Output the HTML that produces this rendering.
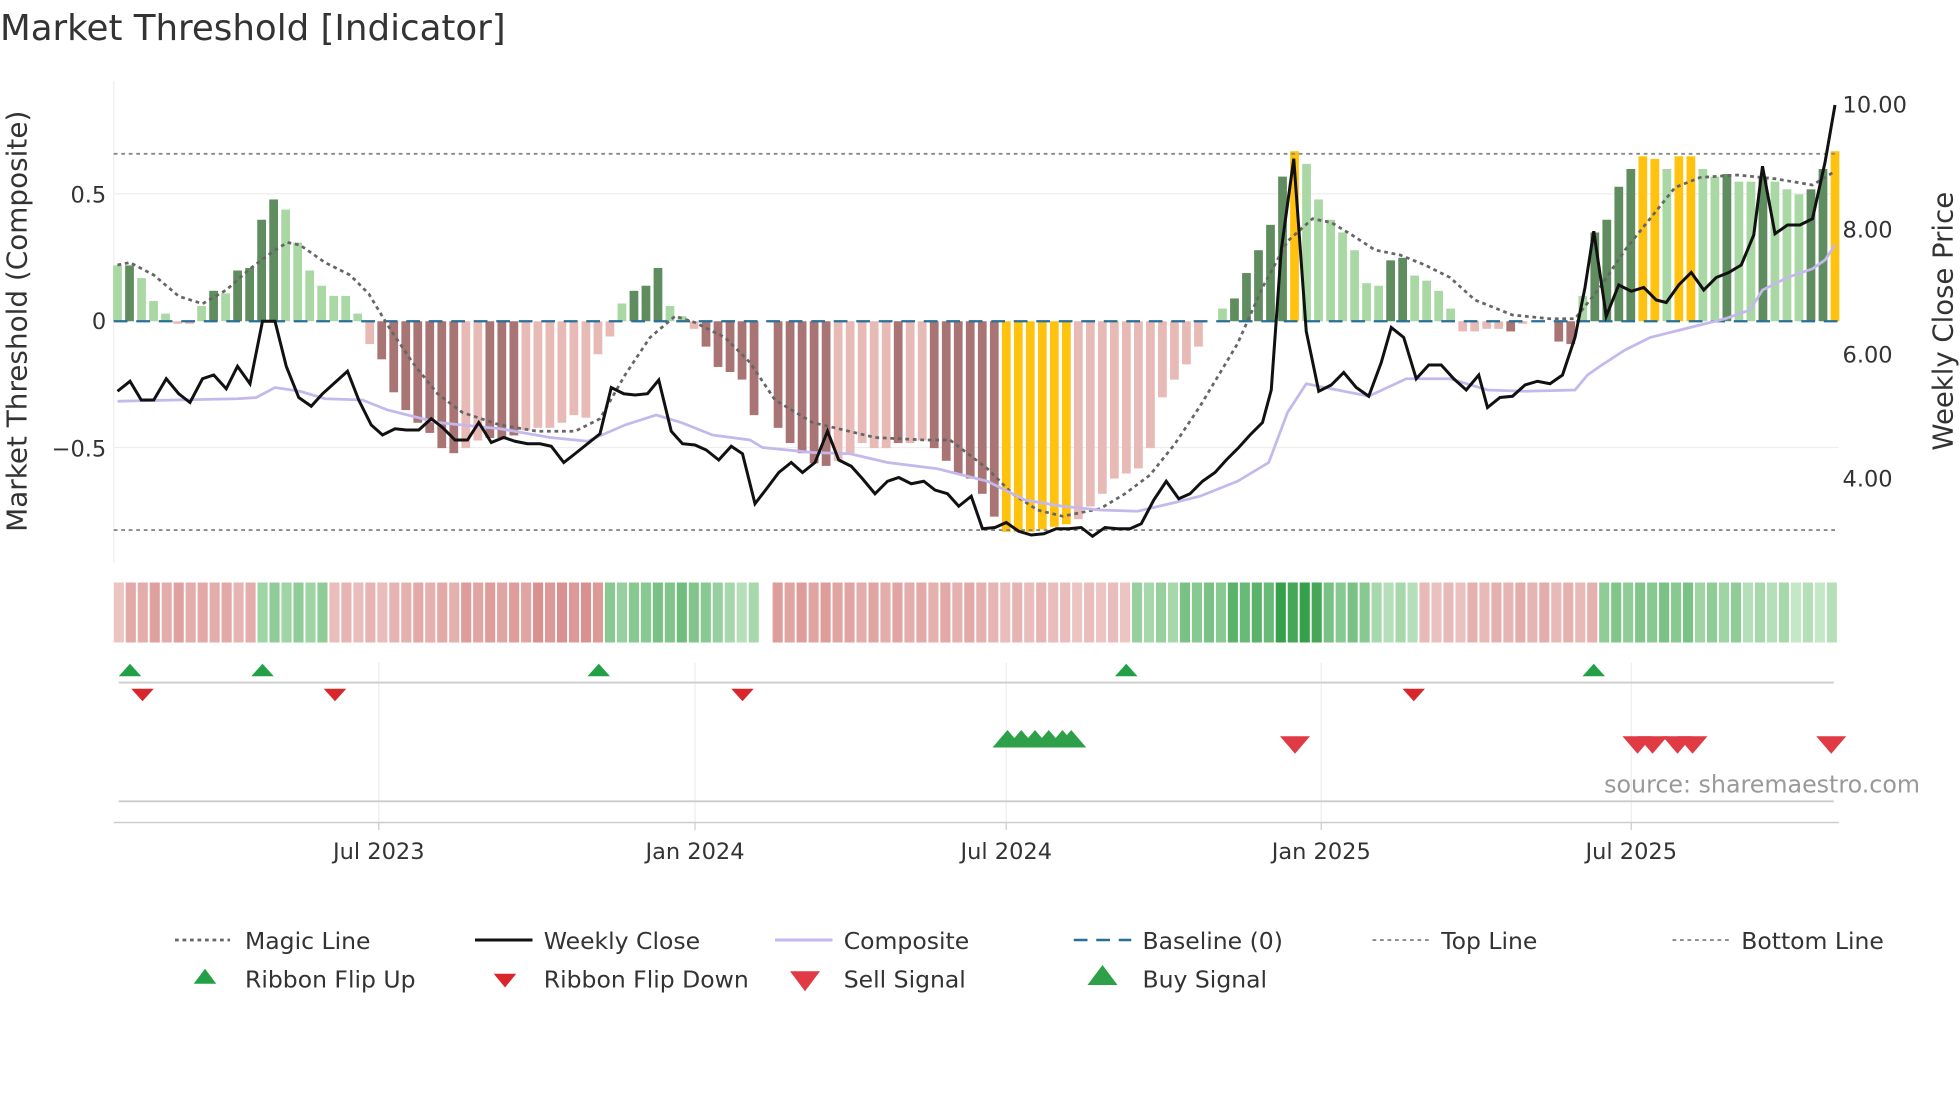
<!DOCTYPE html>
<html><head><meta charset="utf-8"><style>
html,body{margin:0;padding:0;background:#fff;width:1960px;height:1102px;overflow:hidden}
svg{display:block}
text{font-family:"DejaVu Sans","Liberation Sans",sans-serif;fill:#333}
</style></head><body>
<svg id="s" width="1960" height="1102" viewBox="0 0 1568 881.6" preserveAspectRatio="none" xmlns="http://www.w3.org/2000/svg">
<text x="0" y="32" font-size="28.5">Market Threshold [Indicator]</text>
<line x1="91" y1="65" x2="91" y2="450" stroke="#eee" stroke-width="1"/>
<line x1="91" y1="155" x2="1471" y2="155" stroke="#eee"/>
<line x1="91" y1="358" x2="1471" y2="358" stroke="#eee"/>
<g id="bars"></g>
<line x1="91" y1="123" x2="1471" y2="123" stroke="#888" stroke-width="1.5" stroke-dasharray="3,3"/>
<line x1="91" y1="424" x2="1471" y2="424" stroke="#888" stroke-width="1.5" stroke-dasharray="3,3"/>
<line x1="91" y1="257" x2="1471" y2="257" stroke="#2a6f97" stroke-width="1.8" stroke-dasharray="11,7"/>
<polyline id="magic" fill="none" stroke="#666" stroke-width="2.2" stroke-dasharray="3,3"/>
<polyline id="comp" fill="none" stroke="#c4b8ec" stroke-width="2.2"/>
<polyline id="close" fill="none" stroke="#111" stroke-width="2.4"/>
<g font-size="18">
<text x="85" y="162" text-anchor="end">0.5</text>
<text x="85" y="263" text-anchor="end">0</text>
<text x="85" y="365" text-anchor="end">−0.5</text>
<text x="1474" y="90">10.00</text>
<text x="1474" y="190">8.00</text>
<text x="1474" y="290">6.00</text>
<text x="1474" y="389">4.00</text>
</g>
<text transform="translate(21,257) rotate(-90)" font-size="22.3" text-anchor="middle">Market Threshold (Composite)</text>
<text transform="translate(1562,257) rotate(-90)" font-size="22" text-anchor="middle">Weekly Close Price</text>
<g id="ribbon"></g>
<g stroke="#eee" stroke-width="1">
<line x1="303" y1="530" x2="303" y2="660"/><line x1="556" y1="530" x2="556" y2="660"/><line x1="805" y1="530" x2="805" y2="660"/><line x1="1057" y1="530" x2="1057" y2="660"/><line x1="1305" y1="530" x2="1305" y2="660"/>
</g>
<line x1="95" y1="546" x2="1467" y2="546" stroke="#ccc" stroke-width="1.5"/>
<line x1="95" y1="641" x2="1467" y2="641" stroke="#ccc" stroke-width="1.5"/>
<line x1="91" y1="658" x2="1471" y2="658" stroke="#ccc" stroke-width="1.2"/>
<g stroke="#ccc"><line x1="303" y1="658" x2="303" y2="664"/><line x1="556" y1="658" x2="556" y2="664"/><line x1="805" y1="658" x2="805" y2="664"/><line x1="1057" y1="658" x2="1057" y2="664"/><line x1="1305" y1="658" x2="1305" y2="664"/></g>
<g id="marks"></g>
<text x="1536" y="634" font-size="19" text-anchor="end" style="fill:#999">source: sharemaestro.com</text>
<g font-size="18" text-anchor="middle">
<text x="303" y="687">Jul 2023</text><text x="556" y="687">Jan 2024</text><text x="805" y="687">Jul 2024</text><text x="1057" y="687">Jan 2025</text><text x="1305" y="687">Jul 2025</text>
</g>
<g font-size="18.8">
<line x1="140" y1="752" x2="184" y2="752" stroke="#666" stroke-width="2.2" stroke-dasharray="3,3"/><text x="196" y="759">Magic Line</text>
<line x1="380" y1="752" x2="426" y2="752" stroke="#111" stroke-width="2.4"/><text x="435" y="759">Weekly Close</text>
<line x1="620" y1="752" x2="666" y2="752" stroke="#c4b8ec" stroke-width="2.4"/><text x="675" y="759">Composite</text>
<line x1="859" y1="752" x2="905" y2="752" stroke="#2a6f97" stroke-width="2" stroke-dasharray="11,7"/><text x="914" y="759">Baseline (0)</text>
<line x1="1098" y1="752" x2="1143" y2="752" stroke="#888" stroke-width="1.5" stroke-dasharray="3,3"/><text x="1153" y="759">Top Line</text>
<line x1="1338" y1="752" x2="1383" y2="752" stroke="#888" stroke-width="1.5" stroke-dasharray="3,3"/><text x="1393" y="759">Bottom Line</text>
<polygon points="155,787 173,787 164,775" fill="#22a045"/><text x="196" y="790">Ribbon Flip Up</text>
<polygon points="395,779 413,779 404,790" fill="#d9262b"/><text x="435" y="790">Ribbon Flip Down</text>
<polygon points="632,777 656,777 644,793" fill="#e03a45"/><text x="675" y="790">Sell Signal</text>
<polygon points="870,788 894,788 882,772" fill="#2ea04a"/><text x="914" y="790">Buy Signal</text>
</g>
</svg>
<script>
var NS="http://www.w3.org/2000/svg";
function el(p,t,a){var e=document.createElementNS(NS,t);for(var k in a)e.setAttribute(k,a[k]);p.appendChild(e);return e;}
var V="0.22L .22D .17L .08L .03L -.01P -.01P .06L .12D .11L .2D .21D .4D .48D .44L .31L .2L .14L .1L .1L .03L -.09P -.15R -.28R -.35R -.4R -.44R -.5R -.52R -.5P -.47P -.46R -.46R -.45R -.43P -.42P -.42P -.4P -.37P -.38P -.13P -.06P .07L .12D .14D .21D .06L .02L -.03P -.1R -.18R -.2R -.23R -.37R 0P -.42R -.48R -.52R -.56R -.57R -.55P -.52P -.48P -.5P -.5P -.48R -.48P -.47P -.5R -.55R -.6R -.62R -.68R -.77R -.83Y -.83Y -.83Y -.82Y -.81Y -.8Y -.78P -.73P -.68P -.62P -.6P -.58P -.5P -.3P -.23P -.17P -.1P 0P .05L .09D .19D .28D .38D .57D .67Y .62L .48L .4L .35L .28L .15L .14L .24D .25D .18L .16L .12L .05L -.04P -.04P -.03P -.03P -.04R -.01P 0P 0P -.08R -.09R .1L .35D .4D .53D .6D .65Y .64Y .6L .65Y .65Y .6L .57L .58D .55L .55L .57D .55L .52L .5L .52D .6D .67Y".split(" ");
var C={L:"#a9d8a4",D:"#5f8d5f",P:"#e8bab6",R:"#a87474",Y:"#ffc20e"};
var g=document.getElementById("bars"),n=V.length,st=(1468-94)/(n-1);
for(var i=0;i<n;i++){var s=V[i],c=s.slice(-1),v=parseFloat(s),x=94+i*st,y=257-203*v;
if(v==0)continue;el(g,"rect",{x:x-3.5,y:Math.min(y,257),width:7,height:Math.abs(y-257),fill:C[c]});}
var rg=document.getElementById("ribbon");
function mix(a,b,t){return "rgb("+[0,1,2].map(function(k){return Math.round(a[k]+(b[k]-a[k])*t)}).join(",")+")";}
var pk=[240,210,208],rd=[212,130,128],lg=[205,235,205],dg=[55,160,75];
var segs=[[0,11,"r",[.2,.45,.5,.55,.5,.55,.5,.45,.5,.45,.4,.4]],[12,17,"g",[.35]],[18,40,"r",[.3,.45,.6,.75]],[41,53,"g",[.4,.5,.55,.4,.2]],[55,84,"r",[.6,.5,.45,.3,.2]],[85,108,"g",[.3,.5,.7,.95,.5,.2]],[109,123,"r",[.25,.35,.4,.35]],[124,143,"g",[.45,.5,.35,.2,.1]]];
segs.forEach(function(sg){for(var i=sg[0];i<=sg[1];i++){var f=(i-sg[0])/Math.max(1,sg[1]-sg[0]);var arr=sg[3];var t=arr[Math.min(arr.length-1,Math.floor(f*arr.length))];t+=((i%2)?0.06:-0.04);
var col=sg[2]=="r"?mix(pk,rd,t):mix(lg,dg,t);var x=91+i*(1380/144);el(rg,"rect",{x:x,y:466,width:8.1,height:48,fill:col});}});
function pts(id,s){document.getElementById(id).setAttribute("points",s);}
pts("close","94,313 104,305 113,320 123,320 133,303 143,315 152,322 162,303 171,300 181,311 190,293 200,307 210,257 220,257 229,293 239,318 249,325 258,315 268,306 278,297 287,320 297,340 306,348 316,343 325,344 335,344 345,335 354,342 364,352 374,352 383,338 393,354 403,350 412,353 422,355 432,355 441,357 451,370 460,363 470,355 480,347 489,310 499,315 508,316 518,315 527,304 537,345 546,355 556,356 565,360 575,368 585,357 594,363 604,403 614,390 623,378 633,370 642,378 652,370 662,345 671,368 681,373 690,383 700,395 710,385 719,382 729,387 739,385 748,392 758,395 767,405 777,397 786,423 796,422 805,418 815,425 825,428 835,427 845,423 855,423 865,422 874,429 884,422 894,423 904,423 913,419 923,400 933,385 943,399 952,395 962,385 972,378 981,368 991,358 1000,348 1010,338 1017,312 1025,200 1035,127 1045,265 1055,313 1065,308 1075,298 1085,310 1095,317 1105,290 1113,262 1123,270 1133,303 1143,292 1153,292 1163,303 1173,312 1183,300 1190,326 1200,318 1210,317 1220,308 1230,305 1240,307 1250,300 1260,270 1268,230 1275,185 1285,253 1295,228 1305,233 1315,230 1325,240 1333,242 1343,228 1353,218 1363,232 1373,222 1383,218 1393,212 1403,188 1410,133 1420,187 1430,180 1440,180 1450,175 1460,130 1468,84");
pts("comp","94,321 190,319 205,318 220,310 240,313 260,319 290,320 310,328 350,338 400,343 440,350 470,353 500,340 525,332 545,338 570,348 600,352 610,358 650,362 680,363 710,370 750,375 790,385 820,400 850,405 880,408 910,409 940,402 960,397 990,385 1015,370 1030,330 1045,307 1070,312 1095,317 1125,303 1160,303 1190,312 1220,313 1260,312 1270,300 1280,293 1300,280 1320,270 1340,265 1360,260 1380,255 1400,248 1410,232 1430,222 1450,215 1460,208 1468,196");
pts("magic","94,212 104,210 123,220 143,237 162,243 181,232 200,215 220,200 230,194 240,196 260,210 280,220 295,235 310,260 330,290 350,315 370,330 400,340 430,345 460,345 480,335 500,300 520,270 540,253 556,258 580,270 600,290 620,320 650,338 700,350 740,352 760,352 790,375 810,395 830,408 850,413 880,407 900,395 920,380 940,355 960,325 990,275 1010,230 1030,193 1050,175 1065,178 1080,187 1100,200 1120,204 1140,212 1160,222 1180,240 1210,252 1240,255 1260,255 1280,230 1300,200 1320,175 1340,150 1360,142 1390,140 1420,143 1450,148 1468,137");
var m=document.getElementById("marks");
[104,210,479,901,1275].forEach(function(x){el(m,"polygon",{points:(x-9)+",541 "+(x+9)+",541 "+x+",531",fill:"#22a045"});});
[114,268,594,1131].forEach(function(x){el(m,"polygon",{points:(x-9)+",551 "+(x+9)+",551 "+x+",561",fill:"#d9262b"});});
[1036,1310,1322,1342,1354,1465].forEach(function(x){el(m,"polygon",{points:(x-12)+",589 "+(x+12)+",589 "+x+",603",fill:"#e03a45"});});
[806,817,828,839,850,857].forEach(function(x){el(m,"polygon",{points:(x-12)+",598 "+(x+12)+",598 "+x+",584",fill:"#2ea04a"});});
</script>
</body></html>
